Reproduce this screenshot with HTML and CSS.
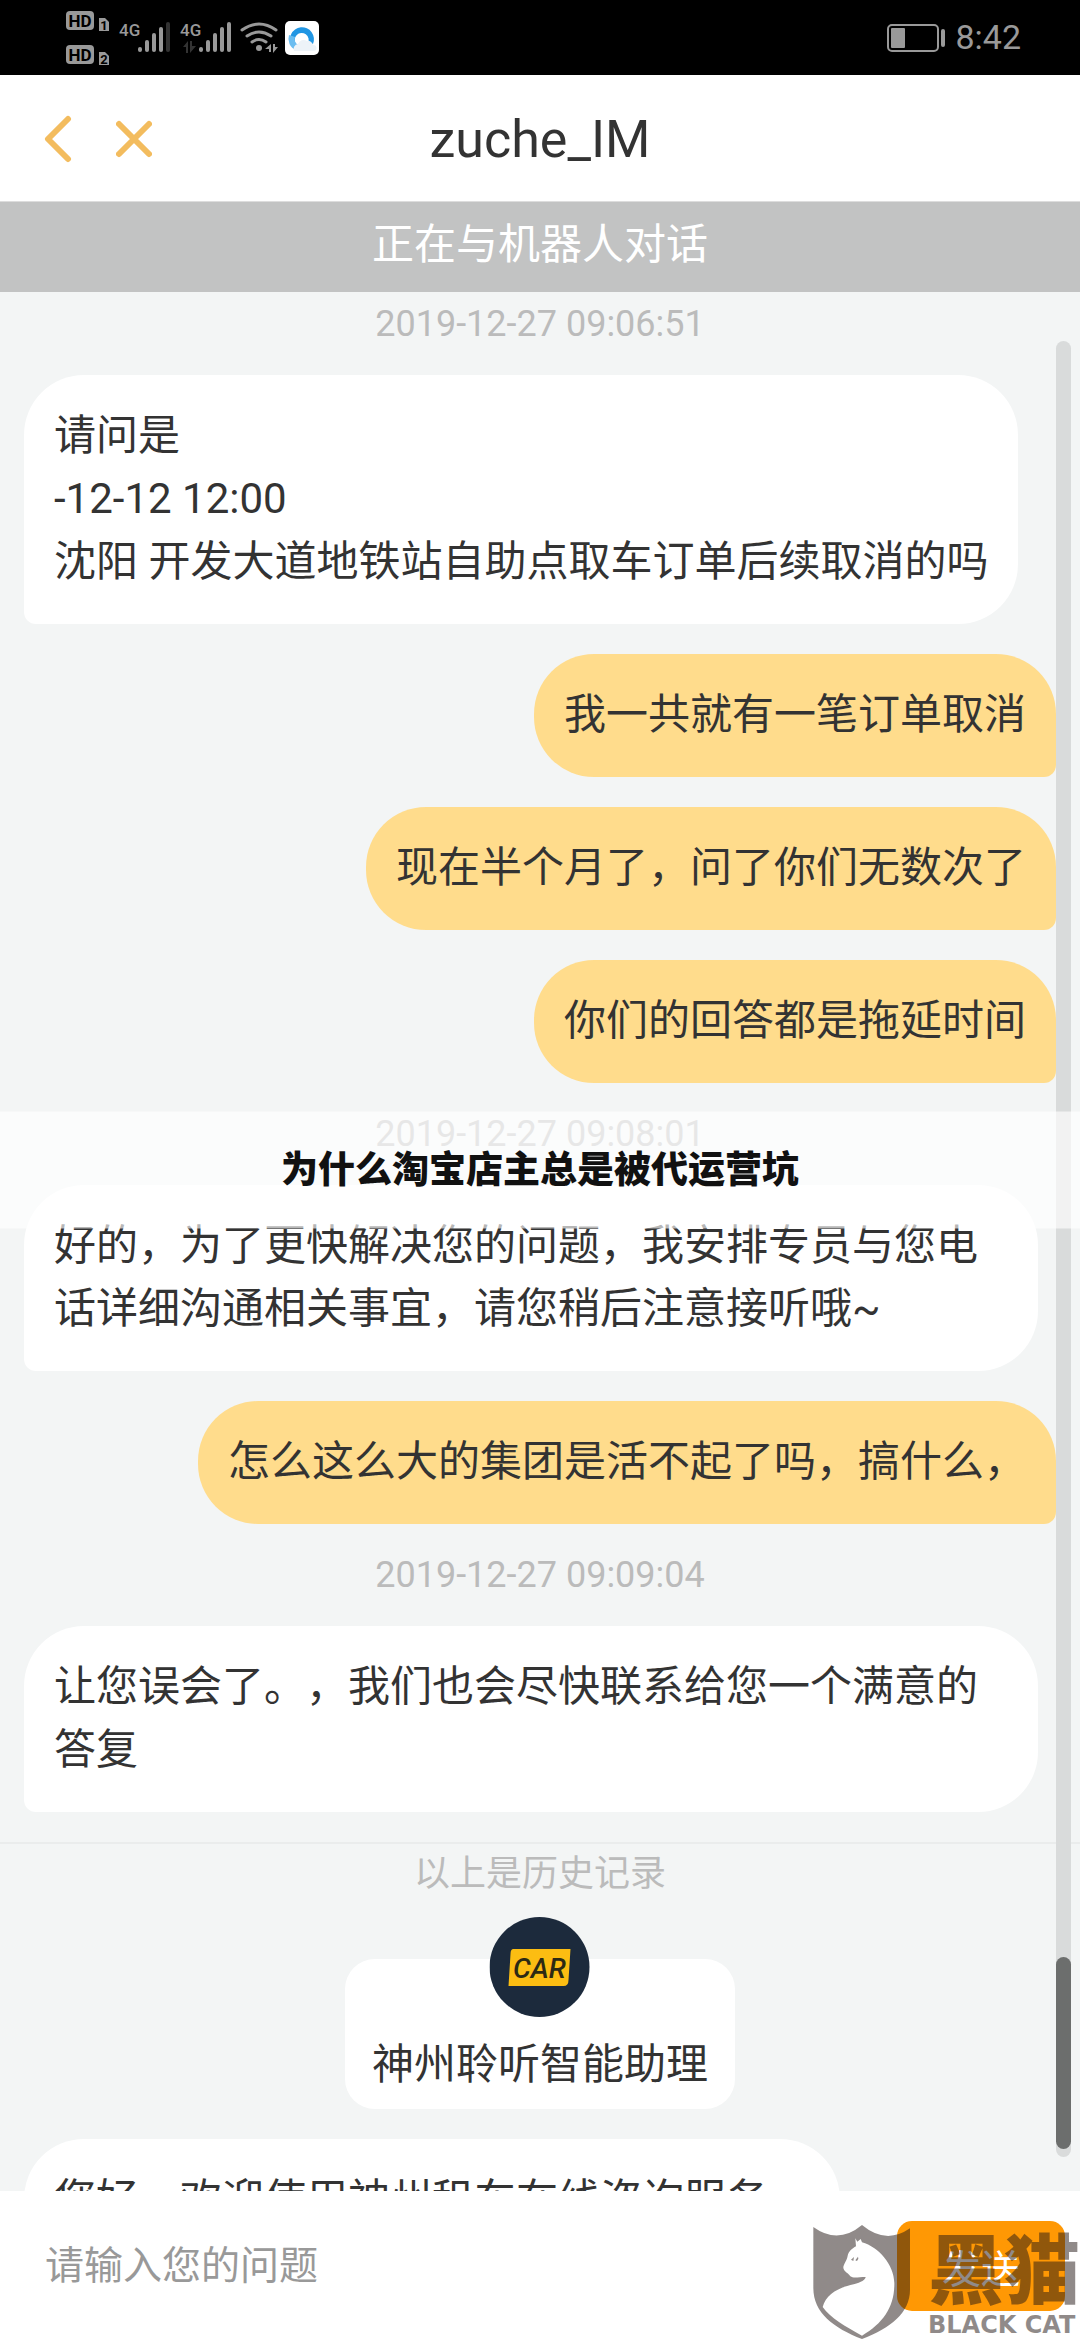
FILE: index.html
```html
<!DOCTYPE html>
<html lang="zh-CN">
<head>
    <meta charset="UTF-8">
    <meta name="viewport" content="width=device-width, initial-scale=1.0">
    <title>zuche_IM</title>
    <link rel="stylesheet" href="styles.css">
</head>
<body>
    <div class="status-bar">
        <svg class="status-icons" viewBox="64 0 258 75" width="258" height="75" fill="#999">
            <!-- HD sim badges -->
            <rect x="66" y="11" width="28" height="19" rx="4"/>
            <text x="80" y="27" class="hd-text">HD</text>
            <path d="M99 18h6l4 4v9h-10z"/>
            <text x="104" y="30" class="sim-text">1</text>
            <rect x="66" y="45" width="28" height="19" rx="4"/>
            <text x="80" y="61" class="hd-text">HD</text>
            <path d="M99 52h6l4 4v9h-10z"/>
            <text x="104" y="64" class="sim-text">2</text>
            <!-- signal 1 -->
            <text x="119" y="36" class="net-text">4G</text>
            <rect x="138" y="47" width="4" height="5" rx="2"/>
            <rect x="145" y="40" width="4" height="12" rx="2"/>
            <rect x="152" y="33" width="4" height="19" rx="2"/>
            <rect x="159" y="27" width="4" height="25" rx="2"/>
            <rect x="166" y="22" width="4" height="30" rx="2" fill="#333"/>
            <!-- signal 2 -->
            <text x="180" y="36" class="net-text">4G</text>
            <path d="M183 47l5-6v12h-2v-6zM190 41v12l6-7h-4v-5z" fill="#333"/>
            <rect x="199" y="47" width="4" height="5" rx="2"/>
            <rect x="206" y="40" width="4" height="12" rx="2"/>
            <rect x="213" y="33" width="4" height="19" rx="2"/>
            <rect x="220" y="27" width="4" height="25" rx="2"/>
            <rect x="227" y="22" width="4" height="30" rx="2"/>
            <!-- wifi -->
            <g fill="none" stroke="#999" stroke-width="3" stroke-linecap="round">
                <path d="M242 30q17-12 34 0"/>
                <path d="M247 36q12-8 24 0"/>
                <path d="M252 42q7-5 14 0"/>
            </g>
            <circle cx="259" cy="48" r="3"/>
            <path d="M265 49l6-5v8h-2v-3zM273 44v9l5-6h-3v-3z"/>
            <!-- browser app -->
            <rect x="285" y="21" width="34" height="34" rx="5" fill="#fff"/>
            <path d="M292 46a12 12 0 1 1 21-2l-5-1a7 7 0 1 0-12 1z" fill="#2196e3"/>
            <path d="M296 50a12 12 0 0 1-7-15l6 2a6 6 0 0 0 4 8z" fill="#6bbdf0"/>
            <path d="M294 51a5 5 0 0 1 4-7a6 6 0 0 1 9-3a5 5 0 0 1 6 4a3 3 0 0 1 1 6z" fill="#edf3f8"/>
        </svg>
        <div class="status-right">
            <svg viewBox="0 0 60 30" width="60" height="30">
                <rect x="1" y="2" width="50" height="26" rx="4" fill="none" stroke="#999" stroke-width="2"/>
                <rect x="4" y="5" width="14" height="20" rx="1" fill="#999"/>
                <rect x="54" y="6" width="4" height="18" rx="2" fill="#999"/>
            </svg>
            <span class="clock">8:42</span>
        </div>
    </div>

    <header class="header">
        <div class="header-actions">
            <button type="button" aria-label="返回">
                <svg viewBox="0 0 30 48" width="30" height="48"><path d="M25 4L5 24l20 20"/></svg>
            </button>
            <button type="button" aria-label="关闭">
                <svg viewBox="0 0 36 48" width="36" height="48"><path d="M3 9l30 30M33 9L3 39"/></svg>
            </button>
        </div>
        <h1>zuche_IM</h1>
    </header>
    <div class="notice">正在与机器人对话</div>

    <main class="chat">
        <time class="time">2019-12-27 09:06:51</time>
        <p class="message robot">请问是<br>-12-12 12:00<br>沈阳 开发大道地铁站自助点取车订单后续取消的吗</p>
        <p class="message user">我一共就有一笔订单取消</p>
        <p class="message user">现在半个月了，问了你们无数次了</p>
        <p class="message user">你们的回答都是拖延时间</p>
        <time class="time">2019-12-27 09:08:01</time>
        <p class="message robot">好的，为了更快解决您的问题，我安排专员与您电话详细沟通相关事宜，请您稍后注意接听哦~</p>
        <p class="message user">怎么这么大的集团是活不起了吗，搞什么，</p>
        <time class="time">2019-12-27 09:09:04</time>
        <p class="message robot">让您误会了。，我们也会尽快联系给您一个满意的答复</p>
        <div class="history">以上是历史记录</div>
        <div class="agent-card">
            <svg class="avatar" viewBox="0 0 101 101" width="101" height="101">
                <circle cx="50" cy="50" r="50" fill="#1c2a3c"/>
                <path d="M24 32h57l-2 31q0 6-5 6H19l2-32q0-5 3-5z" fill="#fcbd12"/>
                <text x="50" y="61" class="avatar-text">CAR</text>
            </svg>
            <span>神州聆听智能助理</span>
        </div>
        <p class="message robot">您好，欢迎使用神州租车在线咨询服务。</p>
        <div class="scroll-track"><div class="scroll-thumb"></div></div>
    </main>

    <form class="input-bar">
        <input type="text" class="input" placeholder="请输入您的问题" aria-label="请输入您的问题">
        <button type="button" class="send-btn">发送</button>
    </form>

    <div class="caption">为什么淘宝店主总是被代运营坑</div>

    <div class="watermark">
        <svg viewBox="90 130 300 351" width="100" height="117">
            <path fill="#231815" fill-rule="evenodd" d="M94 142Q168 196 240 136Q312 196 384 146V330C384 400 325 445 240 478C155 445 94 400 94 325Z
                M220 176L226 186L236 178L240 188C290 202 336 255 337 310C338 380 305 430 240 468C190 440 145 415 122 382C132 345 165 325 215 314C238 308 250 300 251 292C230 292 214 297 205 290C200 281 186 276 184 265C184 253 195 243 197 228C200 215 211 206 222 200Z"/>
            <path fill="#231815" d="M207 240l9-8-2 12zM220 242l8-11 1 6-4 7z"/>
        </svg>
        <div class="watermark-text">
            <span class="watermark-cn">黑猫</span>
            <span class="watermark-en">BLACK CAT</span>
        </div>
    </div>
</body>
</html>
```
FILE: styles.css
```css
* {
    margin: 0;
    padding: 0;
    box-sizing: border-box;
}

body {
    position: relative;
    display: flex;
    flex-direction: column;
    height: 100vh;
    overflow: hidden;
    background-color: #f3f5f5;
    color: #333;
    font-family: Roboto, "Noto Sans CJK SC", sans-serif;
    font-size: 42px;
    line-height: 63px;
    text-spacing-trim: space-all;
}

button {
    border: none;
    background: none;
    font-family: inherit;
    cursor: pointer;
}

svg {
    display: block;
}

/* status bar */
.status-bar {
    display: flex;
    justify-content: space-between;
    align-items: center;
    height: 75px;
    flex-shrink: 0;
    padding: 0 59px 0 64px;
    background-color: #000;
}

.hd-text {
    fill: #000;
    font-size: 17px;
    font-weight: 700;
    text-anchor: middle;
}

.sim-text {
    fill: #000;
    font-size: 13px;
    font-weight: 700;
    text-anchor: middle;
}

.net-text {
    font-size: 17px;
    font-weight: 500;
}

.status-right {
    display: flex;
    align-items: center;
    gap: 8px;
}

.clock {
    color: #999;
    font-size: 34px;
}

/* header */
.header {
    display: flex;
    justify-content: center;
    align-items: center;
    position: relative;
    height: 127px;
    flex-shrink: 0;
    padding-top: 2px;
    background-color: #fff;
    border-bottom: 1px solid #ddd;
}

.header h1 {
    font-size: 52px;
    font-weight: 400;
}

.header-actions {
    position: absolute;
    left: 43px;
    display: flex;
    gap: 43px;
}

.header-actions path {
    fill: none;
    stroke: #f3bc5e;
    stroke-width: 6;
    stroke-linecap: round;
    stroke-linejoin: round;
}

.notice {
    flex-shrink: 0;
    height: 90px;
    line-height: 86px;
    background-color: #c2c3c3;
    color: #fff;
    text-align: center;
}

/* chat */
.chat {
    position: relative;
    display: flex;
    flex-direction: column;
    flex: 1;
    min-height: 0;
    gap: 30px;
    padding-top: 11px;
    overflow: hidden;
}

.chat > * {
    flex-shrink: 0;
}

.time {
    color: #bbb;
    font-size: 36px;
    line-height: 42px;
    text-align: center;
}

.message {
    max-width: 1014px;
    margin: 0 24px;
    padding: 29px 30px 31px;
}

.robot {
    align-self: flex-start;
    background-color: #fff;
    border-radius: 60px 60px 60px 12px;
}

.user {
    align-self: flex-end;
    background-color: #ffdc8c;
    border-radius: 60px 60px 12px 60px;
}

.history {
    border-top: 2px solid #eaecec;
    color: #bbb;
    font-size: 36px;
    line-height: 60px;
    text-align: center;
}

.agent-card {
    position: relative;
    align-self: center;
    margin-top: 25px;
    padding: 74px 27px 13px;
    background-color: #fff;
    border-radius: 30px;
}

.avatar {
    position: absolute;
    top: -42px;
    left: 50%;
    transform: translateX(-50%);
}

.avatar-text {
    fill: #2c2a14;
    font-size: 28px;
    font-weight: 500;
    font-style: italic;
    text-anchor: middle;
}

.scroll-track {
    position: absolute;
    top: 49px;
    right: 9px;
    bottom: 34px;
    width: 15px;
    border-radius: 8px;
    background-color: #d9dbdb;
}

.scroll-thumb {
    position: absolute;
    bottom: 8px;
    width: 100%;
    height: 192px;
    border-radius: 8px;
    background-color: #6c6e6d;
}

/* input bar */
.input-bar {
    display: flex;
    align-items: center;
    flex-shrink: 0;
    height: 149px;
    padding: 0 15px 0 45px;
    background-color: #fff;
}

.input {
    flex: 1;
    min-width: 0;
    border: none;
    outline: none;
    background: none;
    color: #333;
    font-family: inherit;
    font-size: 39px;
}

.input::placeholder {
    color: #999;
}

.send-btn {
    width: 168px;
    height: 90px;
    border-radius: 15px;
    background-color: #ff9804;
    color: #fff;
    font-size: 39px;
}

/* caption band across the middle */
.caption {
    position: absolute;
    top: 50%;
    left: 0;
    right: 0;
    transform: translateY(-50%);
    line-height: 117px;
    background-color: rgba(255, 255, 255, 0.65);
    color: #111;
    font-size: 37px;
    font-weight: 900;
    text-align: center;
}

.watermark {
    position: absolute;
    right: 0;
    bottom: 0;
    display: flex;
    align-items: flex-end;
    gap: 16px;
    opacity: 0.5;
    color: #231815;
    pointer-events: none;
}

.watermark-text {
    display: flex;
    flex-direction: column;
}

.watermark-cn {
    font-size: 76px;
    font-weight: 900;
    line-height: 76px;
}

.watermark-en {
    font-family: "DejaVu Sans", sans-serif;
    font-size: 24px;
    font-weight: 700;
    line-height: 30px;
    white-space: nowrap;
}
```
